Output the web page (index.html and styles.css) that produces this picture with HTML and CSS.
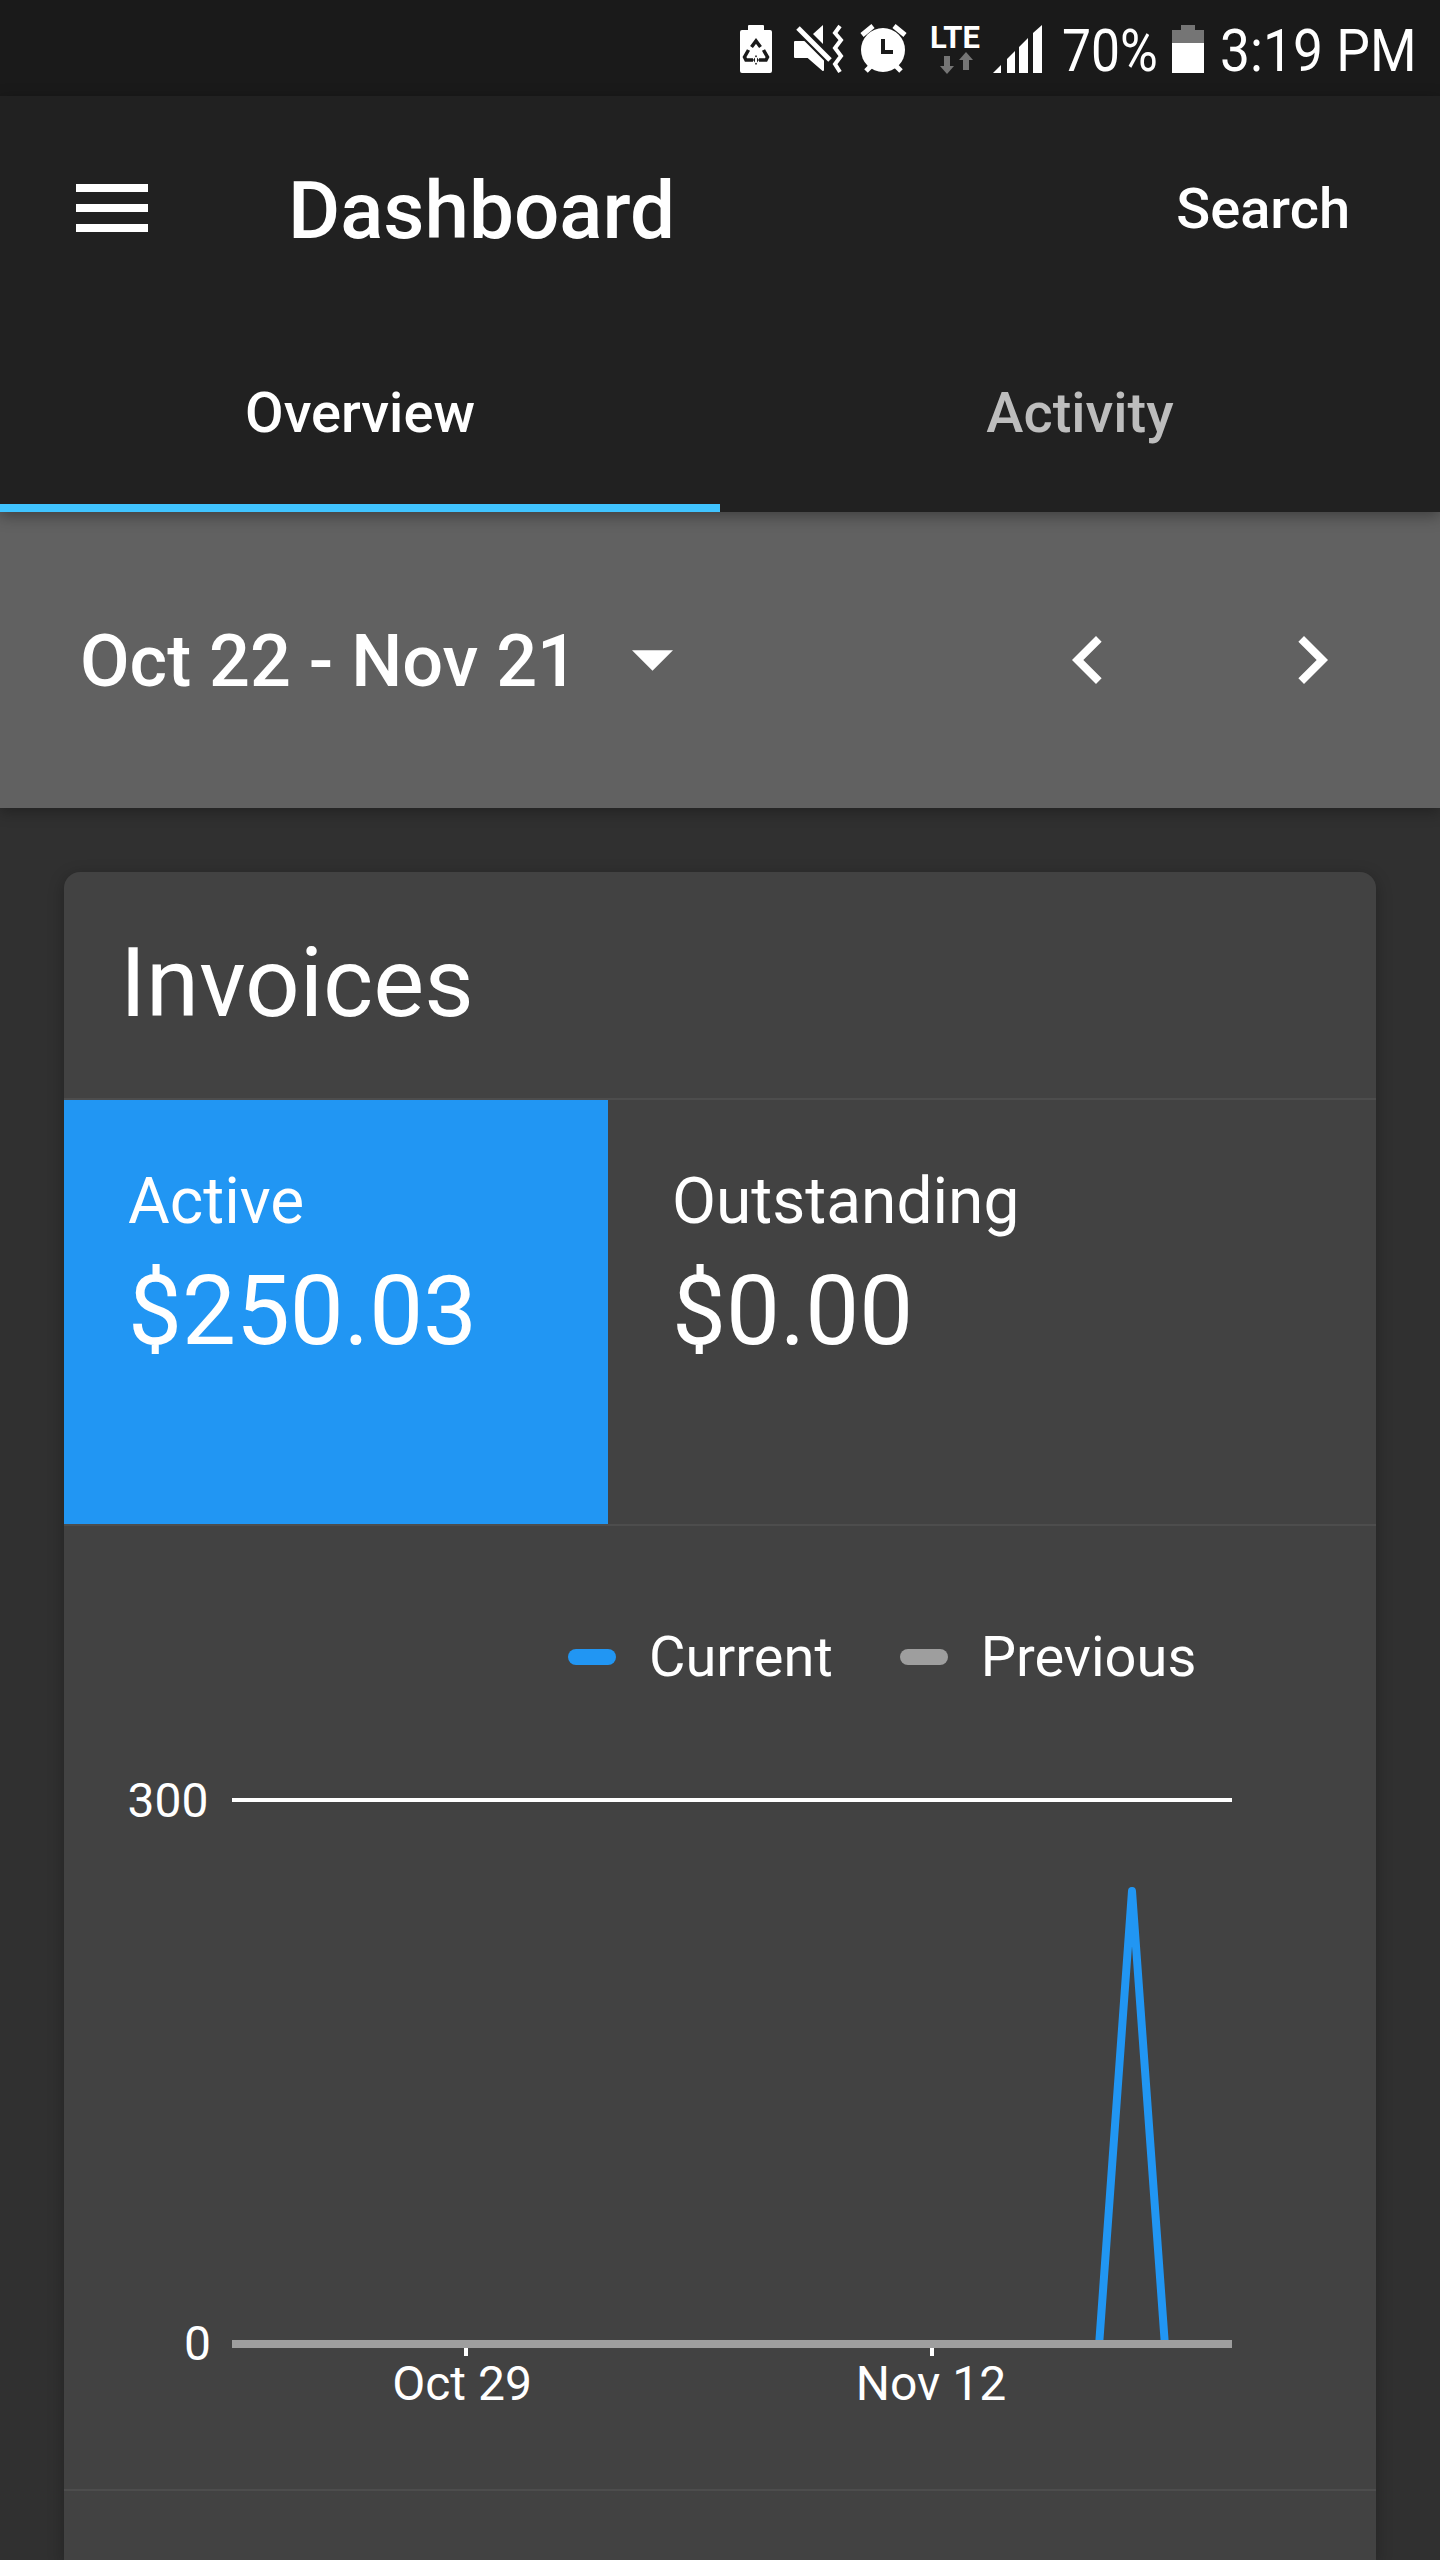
FILE: index.html
```html
<!DOCTYPE html>
<html lang="en">
<head>
<meta charset="utf-8">
<title>Dashboard</title>
<link rel="stylesheet" href="styles.css">
</head>
<body>
<div class="status">
  <svg class="ic ic-battsave" viewBox="0 0 32 48" width="32" height="48">
    <path class="w" d="M8 0h15a1 1 0 0 1 1 1v4h6a2 2 0 0 1 2 2v39a2 2 0 0 1-2 2H2a2 2 0 0 1-2-2V7a2 2 0 0 1 2-2h6V1a1 1 0 0 1 1-1z"/>
    <path class="d-line" d="M11.5 22l4.5-6 4.500 6M8.500 25l-4 7 1.500 3h7M23.500 25l4 7-1.500 3h-7"/>
    <path class="d" d="M17 30v10l-4-5zM15 30v10l4-5z"/>
  </svg>
  <svg class="ic ic-mute" viewBox="0 0 51 48" width="51" height="48">
    <path class="w-round" d="M2 17h9l19 19v9L15 32H2z"/>
    <path class="w" d="M30 0v19L20 9z"/>
    <path class="w-line" d="M5 3l32 32"/>
    <path class="w-line4" d="M47 1l-5 7 6 7-6 8 6 8-6 8 5 8"/>
  </svg>
  <svg class="ic ic-alarm" viewBox="0 0 47 48" width="47" height="48">
    <circle class="w" cx="23" cy="25" r="22"/>
    <path class="w-line" d="M2 10l11-9M45 10L34 1M6 46l5-5M41 46l-5-5"/>
    <path class="d-hand" d="M23 14v13h10"/>
  </svg>
  <svg class="ic ic-lte" viewBox="0 0 50 48" width="50" height="48">
    <text class="lte" x="25" y="23" text-anchor="middle">LTE</text>
    <path class="g" d="M14 31h6v10h4l-7 8-7-8h4z"/>
    <path class="g" d="M33 45h6V35h4l-7-8-7 8h4z"/>
  </svg>
  <svg class="ic ic-signal" viewBox="0 0 49 48" width="49" height="48">
    <path class="w" d="M0 48l8-8v8zM14 48V34l8-8v22zM26 48V22l9-9v35zM40 48V8l9-8v48z"/>
  </svg>
  <span class="stxt stxt-pct">70%</span>
  <svg class="ic ic-batt" viewBox="0 0 32 48" width="32" height="48">
    <path class="g" d="M9 0h14v5h9v13H0V5h9z"/>
    <path class="w" d="M0 18h32v30H0z"/>
  </svg>
  <span class="stxt stxt-time">3:19 PM</span>
</div>

<header class="appbar">
  <div class="toolbar">
    <div class="burger"><i></i><i></i><i></i></div>
    <div class="title">Dashboard</div>
    <div class="search">Search</div>
  </div>
  <nav class="tabs">
    <div class="tab tab-on">Overview</div>
    <div class="tab">Activity</div>
  </nav>
</header>

<section class="range">
  <div class="range-label">Oct 22 - Nov 21</div>
  <svg class="caret" viewBox="0 0 42 21" width="41" height="21"><path d="M0 0h42L21 21z"/></svg>
  <svg class="chev chev-l" viewBox="0 0 24 24" width="96" height="96"><path d="M15.410 7.410L14 6l-6 6 6 6 1.410-1.410L10.830 12z"/></svg>
  <svg class="chev chev-r" viewBox="0 0 24 24" width="96" height="96"><path d="M10 6L8.590 7.410 13.170 12l-4.580 4.580L10 18l6-6z"/></svg>
</section>

<main class="content">
  <article class="card">
    <h2 class="card-title">Invoices</h2>
    <div class="stats">
      <div class="stat stat-on">
        <div class="stat-label">Active</div>
        <div class="stat-value">$250.03</div>
      </div>
      <div class="stat">
        <div class="stat-label">Outstanding</div>
        <div class="stat-value">$0.00</div>
      </div>
    </div>
    <div class="chart">
      <div class="legend">
        <div class="legend-item"><span class="pill pill-blue"></span>Current</div>
        <div class="legend-item"><span class="pill pill-gray"></span>Previous</div>
      </div>
      <svg class="plot" viewBox="64 1689 1312 800" width="1312" height="800">
        <text class="axis" x="208.500" y="1817" text-anchor="end">300</text>
        <text class="axis" x="211" y="2360" text-anchor="end">0</text>
        <line class="grid" x1="232" y1="1800" x2="1232" y2="1800"/>
        <polyline class="series" points="1099,2346 1132,1891 1165,2346"/>
        <line class="base" x1="232" y1="2344" x2="1232" y2="2344"/>
        <line class="tick" x1="466" y1="2348" x2="466" y2="2356"/>
        <line class="tick" x1="932" y1="2348" x2="932" y2="2356"/>
        <text class="axis" x="462" y="2400" text-anchor="middle">Oct 29</text>
        <text class="axis" x="931" y="2400" text-anchor="middle">Nov 12</text>
      </svg>
    </div>
    <div class="card-rest"></div>
  </article>
</main>
</body>
</html>
```

FILE: styles.css
```css
* { box-sizing: border-box; }
html, body { margin: 0; padding: 0; }
html { height: 2560px; overflow: hidden; background: #303030; }
body {
  height: 2560px;
  overflow: hidden;
  background: #303030;
  color: #fff;
  font-family: Roboto, "Liberation Sans", sans-serif;
}

/* status bar */
.status {
  height: 96px;
  background: #1a1a1a;
  display: flex;
  align-items: flex-start;
  padding: 25px 0 0 740px;
}
.ic { display: block; flex: none; overflow: visible; }
.ic-mute { margin-left: 21px; }
.ic-alarm { margin-left: 16px; }
.ic-lte { margin-left: 23px; }
.ic-signal { margin-left: 13px; }
.ic-batt { margin-left: 14px; }
.w { fill: #fff; }
.w-round { fill: #fff; stroke: #fff; stroke-width: 2; stroke-linejoin: round; }
.w-line { fill: none; stroke: #fff; stroke-width: 5; }
.w-line4 { fill: none; stroke: #fff; stroke-width: 4; }
.d { fill: #1a1a1a; }
.d-line { fill: none; stroke: #1a1a1a; stroke-width: 3.5; }
.d-hand { fill: none; stroke: #1a1a1a; stroke-width: 4; }
.g { fill: #757575; }
.lte { font-size: 31px; font-weight: 700; fill: #fff; }
.stxt {
  display: block;
  flex: none;
  margin-top: -4px;
  font-size: 60px;
  line-height: 60px;
  white-space: nowrap;
  transform-origin: 0 50%;
}
.stxt-pct { width: 96px; margin-left: 20px; transform: scaleX(.86); }
.stxt-time { width: 198px; margin-left: 16px; transform: scaleX(.89); }

/* app bar */
.appbar {
  position: relative;
  z-index: 2;
  background: #212121;
  box-shadow: 0 4px 14px rgba(0, 0, 0, .35);
}
.toolbar {
  height: 224px;
  display: flex;
  align-items: center;
  padding: 0 90px 0 76px;
}
.burger { width: 72px; display: flex; flex-direction: column; gap: 12px; }
.burger i { display: block; height: 8px; background: #fff; }
.title {
  margin-left: 140px;
  padding-top: 6px;
  font-size: 80px;
  line-height: 94px;
  font-weight: 500;
}
.search { margin-left: auto; padding-top: 2px; font-size: 56px; line-height: 64px; font-weight: 500; }
.tabs { display: grid; grid-template-columns: 720px 720px; height: 192px; }
.tab {
  height: 192px;
  padding-top: 61px;
  text-align: center;
  font-size: 56px;
  line-height: 64px;
  font-weight: 500;
  color: #bdbdbd;
}
.tab-on { color: #fff; border-bottom: 8px solid #40c4ff; }

/* date range */
.range {
  position: relative;
  z-index: 1;
  height: 296px;
  background: #616161;
  box-shadow: 0 4px 14px rgba(0, 0, 0, .3);
  display: flex;
  align-items: center;
  padding-left: 80px;
}
.range-label { padding-top: 3px; font-size: 72px; line-height: 84px; font-weight: 500; }
.caret { display: block; margin-left: 54px; fill: #fff; }
.chev { display: block; fill: #fff; }
.chev-l { margin-left: 367px; }
.chev-r { margin-left: 128px; }

/* card */
.content { padding: 64px 64px 0; }
.card {
  background: #424242;
  border-radius: 16px 16px 0 0;
  box-shadow: 0 4px 16px rgba(0, 0, 0, .3);
}
.card-title {
  margin: 0;
  height: 228px;
  padding-left: 56px;
  border-bottom: 2px solid #4d4d4d;
  font-size: 96px;
  line-height: 222px;
  font-weight: 400;
}
.stats {
  display: grid;
  grid-template-columns: 544px 1fr;
  height: 426px;
  border-bottom: 2px solid #4d4d4d;
}
.stat { padding: 54px 0 0 64px; }
.stat-on { background: #2196f3; }
.stat-label { font-size: 64px; line-height: 96px; }
.stat-value { font-size: 96px; line-height: 122px; }

/* chart */
.chart { height: 965px; border-bottom: 2px solid #4d4d4d; }
.legend {
  display: flex;
  height: 163px;
  padding: 99px 0 0 504px;
  gap: 67px;
}
.legend-item {
  display: flex;
  align-items: center;
  gap: 33px;
  height: 64px;
  font-size: 56px;
  line-height: 64px;
}
.pill { display: block; width: 48px; height: 16px; border-radius: 8px; }
.pill-blue { background: #2196f3; }
.pill-gray { background: #9e9e9e; }
.plot { display: block; }
.axis { font-size: 48px; fill: #fff; }
.grid { stroke: #fff; stroke-width: 4; }
.base { stroke: #9e9e9e; stroke-width: 8; }
.tick { stroke: #fff; stroke-width: 4; }
.series { fill: none; stroke: #2196f3; stroke-width: 8; stroke-linejoin: round; }
.card-rest { height: 69px; }
```
